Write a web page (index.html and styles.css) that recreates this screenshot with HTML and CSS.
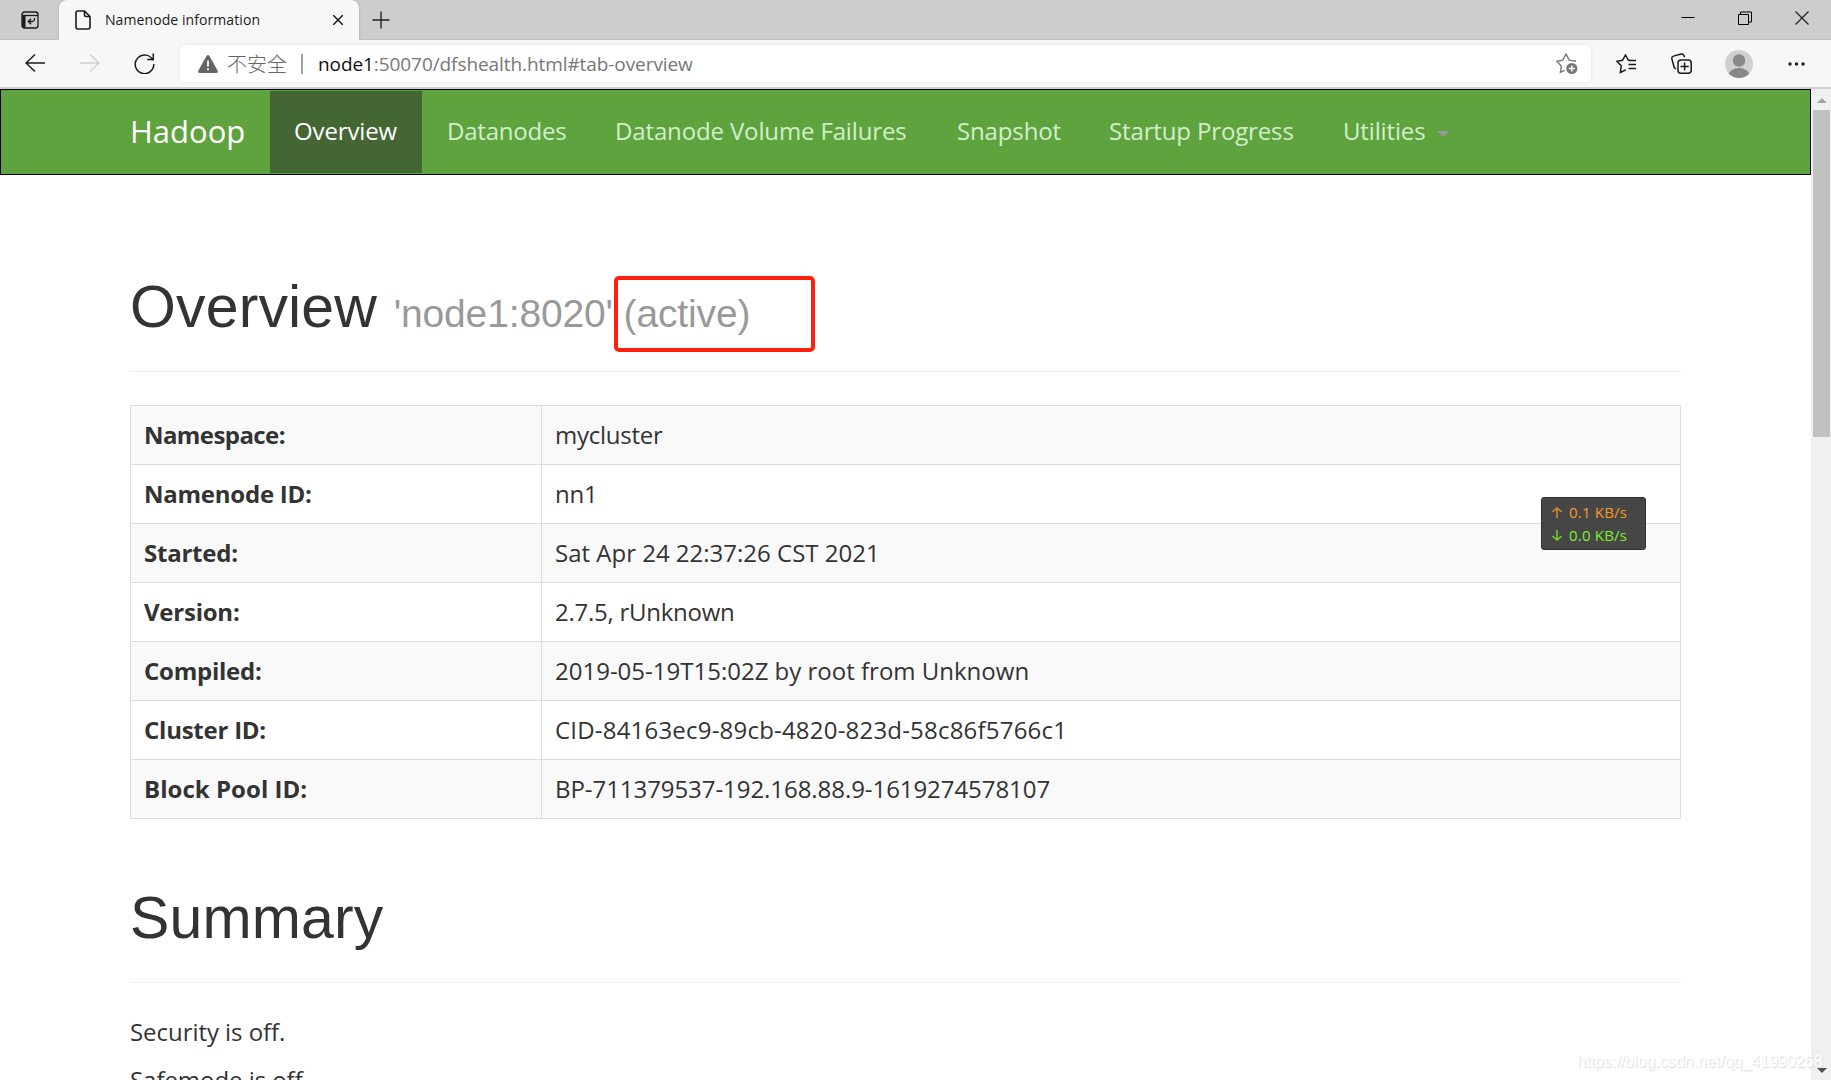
FILE: index.html
```html
<!DOCTYPE html>
<html lang="en">
<head>
<meta charset="utf-8">
<title>Namenode information</title>
<link rel="stylesheet" href="styles.css">
</head>
<body>
<header class="tabbar">
  <div class="tab-actions"><svg width="20" height="20" viewBox="0 0 20 20" fill="none" stroke="#1b1b1b" stroke-width="1.3"><rect x="2" y="2" width="16" height="16" rx="2.5"/><path d="M2 5.500h16"/><path d="M3.800 6v11.500" stroke-width="3.400"/><path d="M14.500 8q.3 3.500-2.500 3.500H8.500M11 8.800L8.300 11.500l2.700 2.700"/></svg></div>
  <div class="tab">
    <svg class="doc" width="16" height="20" viewBox="0 0 16 20" fill="none" stroke="#1b1b1b" stroke-width="1.600"><path d="M3 1h6.500L15 6.500V17a2 2 0 0 1-2 2H3a2 2 0 0 1-2-2V3a2 2 0 0 1 2-2zM9.500 1v4a1.500 1.500 0 0 0 1.500 1.500h4"/></svg>
    <span class="tab-title">Namenode information</span>
    <svg class="tab-close" width="10" height="10" viewBox="0 0 10 10" stroke="#1b1b1b" stroke-width="1.500"><path d="M0 0l10 10M10 0L0 10"/></svg>
  </div>
  <svg class="plus" width="18" height="18" viewBox="0 0 18 18" stroke="#222" stroke-width="1.400"><path d="M9 .5v17M.5 9h17"/></svg>
  <div class="window-controls">
    <svg width="14" height="14" viewBox="0 0 14 14" stroke="#000"><path d="M.5 6.500h13"/></svg>
    <svg width="14" height="14" viewBox="0 0 14 14" fill="none" stroke="#000"><path d="M.5 3.500h10v10H.5zM2.500 3V1h11v10H11"/></svg>
    <svg width="14" height="14" viewBox="0 0 14 14" stroke="#222" stroke-width="1.200"><path d="M.5 .5l13 13M13.500 .5l-13 13"/></svg>
  </div>
</header>
<div class="toolbar">
  <div class="history">
    <svg width="20" height="18" viewBox="0 0 20 18" fill="none" stroke="#1b1b1b" stroke-width="1.500"><path d="M20 9H1M10 .5L1 9l9 8.500"/></svg>
    <svg width="20" height="18" viewBox="0 0 20 18" fill="none" stroke="#d0d0d0" stroke-width="1.500"><path d="M0 9h19M10 .5L19 9l-9 8.500"/></svg>
    <svg width="21" height="22" viewBox="0 0 21 22" fill="none" stroke="#1b1b1b" stroke-width="1.500"><path d="M19 8.500A9.300 9.300 0 1 0 19.800 12M19.300 1.500v6h-6"/></svg>
  </div>
  <div class="address">
    <svg class="warn" width="20" height="18" viewBox="0 0 20 18"><path d="M8.600.8q1.400-1.500 2.800 0l8.300 15q.6 2-1.400 2.200H1.700Q-.3 17.800.3 15.800z" fill="#666"/><path d="M10 5.500v6M10 13.200v2" stroke="#fff" stroke-width="1.700"/></svg>
    <span class="unsafe">不安全</span>
    <span class="divider"></span>
    <span class="url"><span class="host">node1</span>:50070/dfshealth.html#tab-overview</span>
    <svg class="fav-add" width="22" height="22" viewBox="0 0 22 22" fill="none" stroke="#777" stroke-width="1.400"><path d="M20 8.300l-6.800-1.200L10 1 6.800 7.100l-6 1.100 4.600 5-1 6.200 4.200-2"/><circle cx="15.800" cy="15.500" r="5.600" fill="#777" stroke="none"/><path d="M15.800 12.500v6M12.800 15.500h6" stroke="#fff"/></svg>
  </div>
  <div class="tools">
    <svg width="20" height="20" viewBox="0 0 20 20" fill="none" stroke="#1b1b1b" stroke-width="1.500"><path d="M15.500 6.500L12.300 6 9.500 1 6.500 6.300l-5.700 1 4.400 4.500-.8 6.700 5.400-2.700M12.500 6.500H20M12.500 10.500H20M12.500 14.500H20"/></svg>
    <svg width="21" height="21" viewBox="0 0 21 21" fill="none" stroke="#1b1b1b" stroke-width="1.500"><rect x="7" y="7" width="13.200" height="13.200" rx="3"/><path d="M13.600 9.500v8M9.500 13.600h8.200M5 16L3.200 14.500 .9 6Q.3 3.800 2.500 3.100L10 1q2.200-.5 3 1.500l.5 1.700"/></svg>
    <svg width="28" height="28" viewBox="0 0 28 28"><clipPath id="avatar"><circle cx="14" cy="14" r="14"/></clipPath><g clip-path="url(#avatar)"><path fill="#d2d0ce" d="M0 0h28v28H0z"/><circle cx="14" cy="10.500" r="6.200" fill="#8a8886"/><ellipse cx="14" cy="25.500" rx="10.500" ry="7.500" fill="#8a8886"/></g></svg>
    <svg width="17" height="4" viewBox="0 0 17 4" fill="#1b1b1b"><circle cx="2" cy="2" r="1.700"/><circle cx="8.500" cy="2" r="1.700"/><circle cx="15" cy="2" r="1.700"/></svg>
  </div>
</div>
<div class="viewport">
  <div class="page">
    <nav class="navbar">
      <a class="brand">Hadoop</a>
      <a class="nav-item active">Overview</a>
      <a class="nav-item datanodes">Datanodes</a>
      <a class="nav-item failures">Datanode Volume Failures</a>
      <a class="nav-item snapshot">Snapshot</a>
      <a class="nav-item startup">Startup Progress</a>
      <a class="nav-item utilities">Utilities<span class="caret"></span></a>
    </nav>
    <main class="container">
      <h1 class="page-header">Overview <small>'node1:8020' <span class="state">(active)<span class="highlight"></span></span></small></h1>
      <table class="info">
        <tr><th class="name">Namespace:</th><td class="name">mycluster</td></tr>
        <tr><th>Namenode ID:</th><td class="name">nn1</td></tr>
        <tr><th>Started:</th><td>Sat Apr 24 22:37:26 CST 2021</td></tr>
        <tr><th>Version:</th><td class="name">2.7.5, rUnknown</td></tr>
        <tr><th>Compiled:</th><td>2019-05-19T15:02Z by root from Unknown</td></tr>
        <tr><th>Cluster ID:</th><td class="cluster">CID-84163ec9-89cb-4820-823d-58c86f5766c1</td></tr>
        <tr><th class="pool">Block Pool ID:</th><td class="pool">BP-711379537-192.168.88.9-1619274578107</td></tr>
      </table>
      <h1 class="page-header summary">Summary</h1>
      <p>Security is off.</p>
      <p>Safemode is off.</p>
    </main>
  </div>
  <div class="scrollbar">
    <svg width="10" height="5" viewBox="0 0 10 5"><path d="M5 0l5 5H0z" fill="#a3a3a3"/></svg>
    <div class="thumb"></div>
    <svg class="down" width="10" height="5" viewBox="0 0 10 5"><path d="M0 0h10L5 5z" fill="#505050"/></svg>
  </div>
</div>
<aside class="netspeed">
  <div class="speed up"><svg width="10" height="11" viewBox="0 0 10 11" fill="none" stroke="currentColor" stroke-width="1.600"><path d="M5 11V1M.5 5L5 1l4.500 4"/></svg><span>0.1 KB/s</span></div>
  <div class="speed dn"><svg width="10" height="11" viewBox="0 0 10 11" fill="none" stroke="currentColor" stroke-width="1.600"><path d="M5 0v10M.5 6L5 10l4.500-4"/></svg><span>0.0 KB/s</span></div>
</aside>
<div class="watermark">https://blog.csdn.net/qq_41990268</div>
</body>
</html>
```
FILE: styles.css
```css
* { box-sizing: border-box; }
body {
  margin: 0;
  width: 1831px;
  height: 1080px;
  overflow: hidden;
  display: flex;
  flex-direction: column;
  background: #fff;
  color: #333;
  font-family: "Open Sans", "Noto Sans", "Noto Sans CJK SC", sans-serif;
}
svg { display: block; flex: none; }

.tabbar {
  flex: none;
  height: 40px;
  display: flex;
  align-items: center;
  background: #cdcdcd;
  border-bottom: 1px solid #c0c0c0;
}
.tab-actions { width: 59px; padding-left: 20px; }
.tab {
  position: relative;
  width: 300px;
  height: 40px;
  margin-bottom: -1px;
  display: flex;
  align-items: center;
  padding: 0 16px;
  background: #f7f7f7;
  border-radius: 8px 8px 0 0;
  box-shadow: 0 0 3px rgba(0, 0, 0, .2);
  clip-path: inset(0 -4px 0 -4px);
}
.tab-title { flex: 1; margin-left: 14px; font-size: 14px; line-height: 20px; color: #1b1b1b; letter-spacing: .08px; }
.plus { margin-left: 13px; }
.window-controls { margin-left: auto; margin-right: 22px; margin-bottom: 3px; display: flex; gap: 43px; }

.toolbar {
  flex: none;
  height: 49px;
  display: flex;
  align-items: flex-start;
  background: #f7f7f7;
  border-bottom: 2px solid #cfcfcf;
}
.history { width: 180px; height: 46px; padding-left: 25px; display: flex; align-items: center; gap: 35px; }
.history svg:last-child { margin-left: -1px; }
.address {
  width: 1411px;
  height: 37px;
  margin-top: 5px;
  padding-left: 18px;
  padding-right: 13px;
  display: flex;
  align-items: center;
  background: #fff;
  border-radius: 5px;
  box-shadow: 0 0 5px rgba(0, 0, 0, .07);
}
.unsafe { margin-left: 9px; width: 61px; font: 300 20px/37px "Noto Sans CJK SC", sans-serif; color: #666; }
.divider { width: 2px; height: 20px; margin: 0 15px 0 13px; background: #a0a0a0; }
.url { flex: 1; font-size: 19px; line-height: 36px; color: #777; letter-spacing: -.08px; }
.host { color: #111; }
.tools { flex: 1; height: 47px; padding-left: 25px; display: flex; align-items: center; }
.tools svg:nth-child(2) { margin-left: 35px; }
.tools svg:nth-child(3) { margin-left: 33px; }
.tools svg:nth-child(4) { margin-left: 35px; }

.viewport { flex: 1; min-height: 0; display: flex; overflow: hidden; }
.page { width: 1811px; overflow: hidden; }
.navbar {
  height: 86px;
  padding: 1px 0 1px 129px;
  display: flex;
  border: 1px solid #000;
  background: #5fa33e;
}
.brand { width: 140px; font-size: 31px; line-height: 81px; color: #fff; white-space: nowrap; }
.nav-item { padding-left: 24px; font-size: 24px; line-height: 79px; color: #d2efcb; white-space: nowrap; letter-spacing: -.14px; }
.nav-item.active { width: 152px; background: #446633; color: #fff; }
.datanodes { width: 169px; padding-left: 25px; letter-spacing: -.2px; }
.failures { width: 341px; }
.snapshot { width: 153px; padding-left: 25px; }
.startup { width: 233px; }
.utilities { display: flex; padding-left: 25px; }
.caret { margin: 40px 0 0 11px; width: 0; height: 0; border: 6px solid transparent; border-top-color: #999; border-bottom: 0; }

.container { width: 1551px; margin-left: 130px; }
.page-header {
  margin: 0;
  height: 197px;
  padding-top: 97px;
  border-bottom: 1px solid #eee;
  font: 400 59px/70px "Liberation Sans", Arial, sans-serif;
  letter-spacing: .15px;
  white-space: nowrap;
}
.page-header small { font-size: 39px; color: #999; letter-spacing: -.14px; }
.state { position: relative; }
.highlight {
  position: absolute;
  left: -10px;
  top: -16px;
  width: 201px;
  height: 76px;
  border: 4px solid #ff1f0f;
  border-radius: 5px;
}
.info {
  width: 1551px;
  margin-top: 33px;
  border-collapse: collapse;
  table-layout: fixed;
  font-size: 24px;
  line-height: 34px;
}
.info tr { height: 59px; }
.info tr:nth-child(odd) { background: #f9f9f9; }
.info th, .info td { padding: 0 0 0 13px; border: 1px solid #ddd; text-align: left; }
.info th { width: 411px; font-weight: 700; letter-spacing: -.24px; }
.info td.name { letter-spacing: -.25px; }
.info th.name { letter-spacing: -.58px; }
.info td.cluster { letter-spacing: .2px; }
.info td.pool { letter-spacing: -.06px; }
.info th.pool { letter-spacing: .04px; }
.page-header.summary { height: 164px; padding-top: 64px; }
.container p { margin: 0; padding-top: 32px; font-size: 24px; line-height: 34px; letter-spacing: -.05px; }
.container p + p { padding-top: 14px; }

.scrollbar { width: 20px; padding: 9px 0 7px 2px; display: flex; flex-direction: column; background: #f0f0f0; }
.scrollbar svg { margin-left: 4px; }
.thumb { width: 17px; height: 327px; margin-top: 7px; background: #c1c1c1; }
.scrollbar .down { margin-top: auto; }

.netspeed {
  position: absolute;
  left: 1541px;
  top: 497px;
  width: 105px;
  height: 53px;
  padding: 3px 0 0 10px;
  background: rgba(50, 50, 50, .9);
  border: 1px solid #303030;
  border-radius: 3px;
}
.speed { display: flex; align-items: center; gap: 7px; font-size: 15px; line-height: 23px; letter-spacing: .2px; }
.up { color: #f59a23; }
.dn { color: #7cf02a; }
.speed svg { opacity: .8; }
.watermark {
  position: absolute;
  left: 1577px;
  top: 1052px;
  font: 16px/20px "Liberation Sans", Arial, sans-serif;
  color: #fff;
  text-shadow: 1px 1px 1px #d8d8d8;
  white-space: nowrap;
}
```
